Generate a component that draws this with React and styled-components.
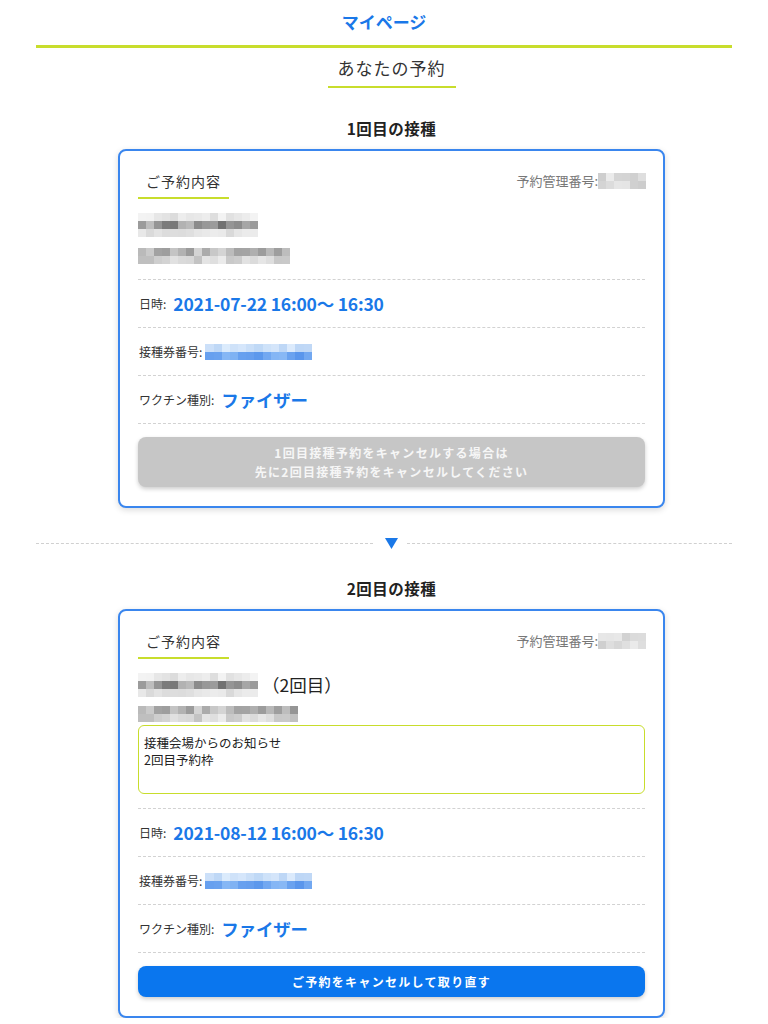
import React from "react";
import styled, { createGlobalStyle } from "styled-components";

const GlobalStyle = createGlobalStyle`
  * { box-sizing: border-box; }
  body {
    margin: 0;
    background: #fff;
    font-family: "Noto Sans CJK JP", "Noto Sans", sans-serif;
    color: #333;
  }
`;

const BLUE = "#1a78e8";
const LIME = "#c8dd2c";

const Page = styled.div`
  padding: 0 36px 0;
`;

const Header = styled.header`
  padding: 10px 0 11px;
  text-align: center;
  font-size: 17px;
  line-height: 24px;
  font-weight: 700;
  color: ${BLUE};
  border-bottom: 3px solid ${LIME};
`;

const Column = styled.main`
  padding-left: 15px;
  display: flex;
  flex-direction: column;
  align-items: center;
`;

const PageTitle = styled.h1`
  margin: 8px 0 0;
  padding: 0 10px 6px;
  font-size: 17px;
  line-height: 24px;
  font-weight: 400;
  letter-spacing: 1px;
  color: #333;
  border-bottom: 2px solid ${LIME};
`;

const DoseTitle = styled.h2`
  margin: ${(p) => p.$top}px 0 10px;
  font-size: 15.5px;
  line-height: 22px;
  font-weight: 700;
  letter-spacing: 0.5px;
  color: #222;
`;

const Card = styled.section`
  width: 547px;
  border: 2px solid #3a86ee;
  border-radius: 8px;
  box-shadow: 0 2px 6px rgba(0, 0, 0, 0.15);
  padding: 20px 18px 19px;
  background: #fff;
`;

const CardHead = styled.div`
  display: flex;
  justify-content: space-between;
  align-items: flex-start;
`;

const Tab = styled.div`
  padding: 0 8px 6px;
  font-size: 14px;
  line-height: 20px;
  letter-spacing: 1px;
  color: #333;
  border-bottom: 2px solid ${LIME};
`;

const RefNo = styled.div`
  display: flex;
  align-items: center;
  font-size: 13px;
  line-height: 20px;
  color: #777;
  margin-right: -1px;
`;

const Mosaic = styled.div`
  display: grid;
  grid-template-columns: repeat(${(p) => p.$cols}, ${(p) => p.$w}px);
  grid-auto-rows: ${(p) => p.$h}px;
  margin: ${(p) => p.$margin || 0};
  flex-shrink: 0;
`;

const Cell = styled.div`
  background: ${(p) => p.$c};
`;

const NameRow = styled.div`
  display: flex;
  align-items: center;
  gap: 4px;
  margin-top: ${(p) => p.$top}px;
`;

const Visit = styled.span`
  font-size: 17.5px;
  line-height: 24px;
  color: #222;
`;

const Notice = styled.div`
  margin-top: 3px;
  height: 69px;
  border: 1.5px solid ${LIME};
  border-radius: 6px;
  padding: 8px 5px;
  font-size: 12.5px;
  line-height: 17px;
  color: #222;
`;

const Rows = styled.div`
  margin-top: ${(p) => p.$top}px;
  border-bottom: 1px dashed #d2d2d2;
`;

const InfoRow = styled.div`
  height: 48px;
  border-top: 1px dashed #d2d2d2;
  display: flex;
  align-items: center;
  gap: 7px;
  padding-left: 1px;
`;

const Label = styled.span`
  font-size: 12px;
  color: #333;
`;

const Value = styled.span`
  font-size: 17.5px;
  font-weight: 700;
  color: ${BLUE};
  letter-spacing: -0.2px;
`;

const Button = styled.button`
  display: block;
  width: 100%;
  margin-top: 13px;
  height: ${(p) => p.$h}px;
  border: none;
  border-radius: 8px;
  background: ${(p) => (p.$disabled ? "#c6c6c6" : "#0a76ee")};
  color: ${(p) => (p.$disabled ? "#f6f6f6" : "#fff")};
  font-family: inherit;
  font-size: 12px;
  font-weight: 700;
  line-height: 19px;
  letter-spacing: 1.3px;
  box-shadow: 0 2px 4px rgba(0, 0, 0, 0.2);
  cursor: ${(p) => (p.$disabled ? "default" : "pointer")};
`;

const ArrowDivider = styled.div`
  display: flex;
  align-items: center;
  margin-top: 29px;
  height: 12px;
`;

const DotLine = styled.div`
  flex: ${(p) => p.$grow} 1 0;
  border-top: 1px dashed #d0d0d0;
`;

const Arrow = styled.svg`
  margin: 0 9px 0 12px;
  flex-shrink: 0;
`;

// deterministic pixel mosaic standing in for the redacted text
const hash = (n) => {
  const x = Math.sin(n * 127.1 + 311.7) * 43758.5453;
  return x - Math.floor(x);
};

const grey = (seed, lo, hi) => {
  const v = Math.round(lo + hash(seed) * (hi - lo));
  return `rgb(${v},${v},${v})`;
};

const blue = (seed, strong) => {
  const t = hash(seed);
  return strong
    ? `rgb(${Math.round(90 + t * 60)},${Math.round(150 + t * 45)},${Math.round(236 + t * 12)})`
    : `rgb(${Math.round(190 + t * 30)},${Math.round(215 + t * 20)},${Math.round(246 + t * 6)})`;
};

const Pixels = ({ cols, rows, w = 8, h = 8, color, seed = 1, margin }) => {
  const cells = [];
  for (let r = 0; r < rows; r++) {
    for (let c = 0; c < cols; c++) {
      cells.push(<Cell key={r * cols + c} $c={color(seed * 97 + r * 31 + c, r)} />);
    }
  }
  return (
    <Mosaic $cols={cols} $w={w} $h={h} $margin={margin}>
      {cells}
    </Mosaic>
  );
};

const nameColor = (s, r) => (r === 1 ? grey(s, 110, 200) : grey(s, 215, 245));
const addrColor = (s, r) => (r === 0 ? grey(s, 145, 222) : grey(s, 190, 236));
const refColor = (s) => grey(s, 205, 235);
const ticketColor = (s, r) => blue(s, r === 1);

const Reservation = ({ date, second, action }) => (
  <Card>
    <CardHead>
      <Tab>ご予約内容</Tab>
      <RefNo>
        予約管理番号:
        <Pixels cols={6} rows={2} h={8} color={refColor} seed={second ? 5 : 4} />
      </RefNo>
    </CardHead>

    <NameRow $top={14}>
      <Pixels cols={15} rows={3} w={8} h={8} color={nameColor} seed={2} />
      {second && <Visit>（2回目）</Visit>}
    </NameRow>
    <Pixels
      cols={second ? 20 : 19}
      rows={2}
      w={8}
      h={8}
      color={addrColor}
      seed={3}
      margin={second ? "9px 0 0" : "11px 0 0"}
    />

    {second && (
      <Notice>
        接種会場からのお知らせ
        <br />
        2回目予約枠
      </Notice>
    )}

    <Rows $top={second ? 14 : 15}>
      <InfoRow>
        <Label>日時:</Label>
        <Value>{date}</Value>
      </InfoRow>
      <InfoRow>
        <Label>接種券番号:</Label>
        <Pixels cols={13} rows={2} w={8.2} h={8} color={ticketColor} seed={6} margin="0 0 0 -4px" />
      </InfoRow>
      <InfoRow>
        <Label>ワクチン種別:</Label>
        <Value>ファイザー</Value>
      </InfoRow>
    </Rows>

    {action}
  </Card>
);

export default function App() {
  return (
    <>
      <GlobalStyle />
      <Page>
        <Header>マイページ</Header>
        <Column>
          <PageTitle>あなたの予約</PageTitle>

          <DoseTitle $top={29}>1回目の接種</DoseTitle>
          <Reservation
            date="2021-07-22 16:00〜 16:30"
            action={
              <Button $disabled $h={50}>
                1回目接種予約をキャンセルする場合は
                <br />
                先に2回目接種予約をキャンセルしてください
              </Button>
            }
          />
        </Column>

        <ArrowDivider>
          <DotLine $grow={336} />
          <Arrow width="13" height="11" viewBox="0 0 13 11">
            <polygon points="0,0 13,0 6.5,11" fill={BLUE} />
          </Arrow>
          <DotLine $grow={324} />
        </ArrowDivider>

        <Column>
          <DoseTitle $top={28}>2回目の接種</DoseTitle>
          <Reservation
            second
            date="2021-08-12 16:00〜 16:30"
            action={<Button $h={31}>ご予約をキャンセルして取り直す</Button>}
          />
        </Column>
      </Page>
    </>
  );
}
